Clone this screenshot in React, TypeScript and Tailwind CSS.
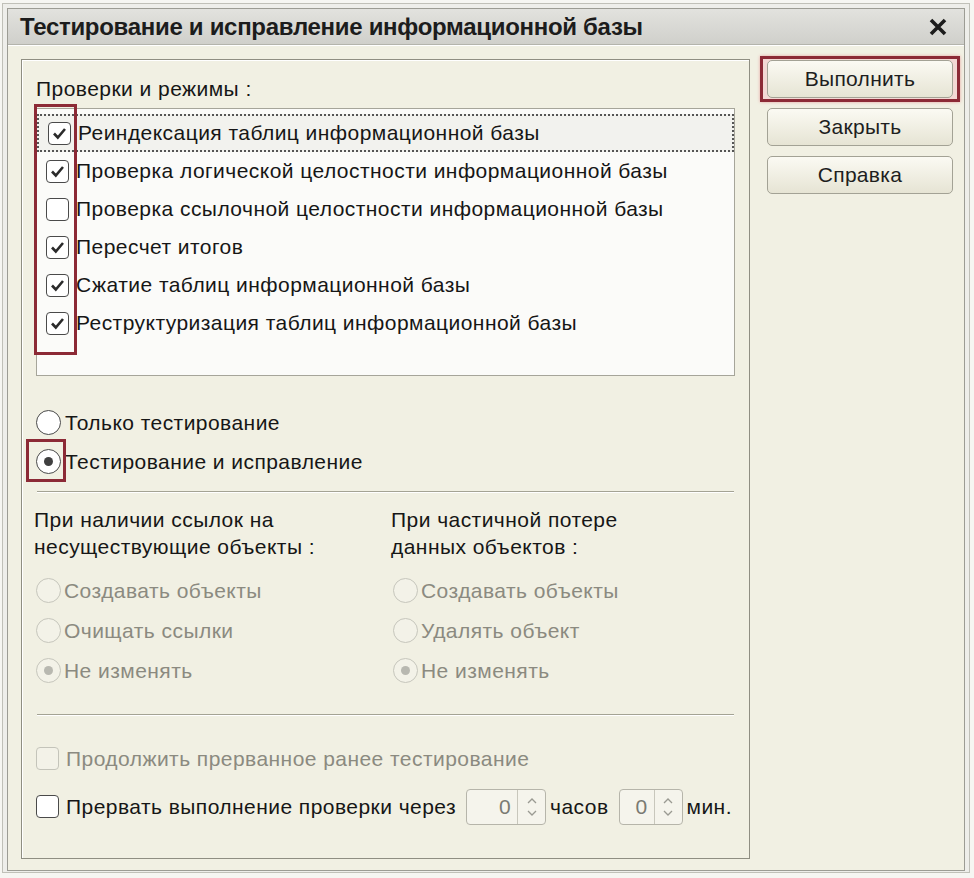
import React from "react";

const FONT = { fontFamily: '"Liberation Sans", Arial, sans-serif' };

const CHECKS = [
  { label: "Реиндексация таблиц информационной базы", checked: true, focus: true },
  { label: "Проверка логической целостности информационной базы", checked: true },
  { label: "Проверка ссылочной целостности информационной базы", checked: false },
  { label: "Пересчет итогов", checked: true },
  { label: "Сжатие таблиц информационной базы", checked: true },
  { label: "Реструктуризация таблиц информационной базы", checked: true },
];

function CheckBox({ checked, disabled }: { checked?: boolean; disabled?: boolean }) {
  return (
    <div
      className={`flex h-[23px] w-[23px] shrink-0 items-center justify-center rounded-[4px] border-[1.5px] ${
        disabled ? "border-[#c4c4ba] bg-[#f3f2e8]" : "border-[#4a4a4a] bg-white"
      }`}
    >
      {checked && (
        <svg width="17" height="17" viewBox="0 0 17 17">
          <path d="M3 8.5 L6.8 12.5 L14 4" fill="none" stroke="#2b2b2b" strokeWidth="2.6" />
        </svg>
      )}
    </div>
  );
}

function Radio({ selected, disabled }: { selected?: boolean; disabled?: boolean }) {
  return (
    <div
      className={`flex h-[25px] w-[25px] shrink-0 items-center justify-center rounded-full border-[1.5px] ${
        disabled ? "border-[#c6c6bc] bg-[#f3f2e8]" : "border-[#4a4a4a] bg-white"
      }`}
    >
      {selected && (
        <div
          className={`h-[9px] w-[9px] rounded-full ${
            disabled ? "bg-[#b8b8b0]" : "bg-[#404040]"
          }`}
        />
      )}
    </div>
  );
}

function Button({ label, primary }: { label: string; primary?: boolean }) {
  const btn = (
    <div className="flex h-[38px] items-center justify-center rounded-[5px] border border-[#a3a295] bg-gradient-to-b from-[#fbfaf3] to-[#e6e4d4] text-[21px] tracking-[0.3px] text-[#1e1e1e]">
      {label}
    </div>
  );
  if (!primary) return btn;
  return (
    <div className="-mx-[7px] -my-[4px] border-[3px] border-[#8c2a36] bg-[#f3d8d4] px-[4px] py-[1px] shadow-[0_0_3px_#e6a0a0]">
      {btn}
    </div>
  );
}

function SpinBox({ width }: { width: string }) {
  return (
    <div className={`flex h-[36px] ${width} shrink-0 items-stretch rounded-[4px] border border-[#b6b5aa] bg-[#f5f4ec]`}>
      <div className="flex flex-1 items-center justify-end pr-[6px] text-[21px] text-[#7a7a72]">0</div>
      <div className="flex w-[28px] flex-col items-center justify-center gap-[6px] border-l border-[#c8c7bc]">
        <svg width="10" height="6" viewBox="0 0 10 6">
          <path d="M1 5 L5 1 L9 5" fill="none" stroke="#9a9a92" strokeWidth="1.3" />
        </svg>
        <svg width="10" height="6" viewBox="0 0 10 6">
          <path d="M1 1 L5 5 L9 1" fill="none" stroke="#9a9a92" strokeWidth="1.3" />
        </svg>
      </div>
    </div>
  );
}

function Separator() {
  return <div className="mx-[15px] h-[2px] border-t border-b border-t-[#a4a394] border-b-white" />;
}

export default function App() {
  return (
    <div style={FONT} className="h-[878px] w-[974px] bg-[#f6f6f2] pl-[2px] pt-[3px]">
      <div className="h-[870px] w-[968px] border border-[#c0c0b8] bg-[#eeeeea] p-[4px]">
        <div className="flex h-[863px] w-[958px] flex-col border border-[#9c9c94]">
          {/* title bar */}
          <div className="flex h-[36px] shrink-0 items-center justify-between border-b border-[#b4b4ac] bg-gradient-to-b from-[#e2e2de] to-[#d0d0cb] pl-[12px] pr-[16px]">
            <span className="text-[24px] font-bold tracking-[-0.3px] text-[#1c1c1c]">
              Тестирование и исправление информационной базы
            </span>
            <svg width="20" height="18" viewBox="0 0 20 18">
              <path d="M3 2 L17 16 M17 2 L3 16" stroke="#1c1c1c" strokeWidth="3.6" />
            </svg>
          </div>

          {/* body */}
          <div className="flex flex-1 gap-[17px] border-t border-white bg-[#f1f0e3] pl-[13px] pt-[13px] text-[21px] tracking-[0.45px] text-[#161616]">
            {/* main panel */}
            <div className="relative flex h-[800px] w-[729px] shrink-0 flex-col border border-[#8f8e82] shadow-[inset_1px_1px_0_#fff]">
              <div className="pl-[14px] pt-[16px] leading-[26px]">Проверки и режимы :</div>

              <div className="relative mx-[14px] mt-[6px] h-[268px] border border-[#a6a59a] bg-[#fbfbf9] pt-[5px]">
                {CHECKS.map((c) => (
                  <div
                    key={c.label}
                    className={`flex h-[38px] items-center gap-[7px] pl-[9px] ${
                      c.focus ? "border-2 border-dotted border-[#555] bg-[#f2f2ee] pl-[7px]" : ""
                    }`}
                  >
                    <CheckBox checked={c.checked} />
                    <span className="whitespace-nowrap">{c.label}</span>
                  </div>
                ))}
              </div>

              <div className="flex flex-col gap-[14px] pl-[14px] pt-[34px]">
                <div className="flex h-[25px] items-center gap-[4px]">
                  <Radio />
                  <span>Только тестирование</span>
                </div>
                <div className="flex h-[25px] items-center gap-[4px]">
                  <Radio selected />
                  <span>Тестирование и исправление</span>
                </div>
              </div>

              <div className="mt-[17px]">
                <Separator />
              </div>

              <div className="flex pl-[12px] pt-[13px]">
                {[
                  {
                    title: ["При наличии ссылок на", "несуществующие объекты :"],
                    items: ["Создавать объекты", "Очищать ссылки", "Не изменять"],
                  },
                  {
                    title: ["При частичной потере", "данных объектов :"],
                    items: ["Создавать объекты", "Удалять объект", "Не изменять"],
                  },
                ].map((col) => (
                  <div key={col.title[0]} className="w-[357px]">
                    <div className="leading-[27px]">
                      <div>{col.title[0]}</div>
                      <div>{col.title[1]}</div>
                    </div>
                    <div className="mt-[18px] flex flex-col gap-[15px] pl-[2px]">
                      {col.items.map((it, i) => (
                        <div key={it} className="flex h-[25px] items-center gap-[3px] text-[#8b8a80]">
                          <Radio disabled selected={i === 2} />
                          <span>{it}</span>
                        </div>
                      ))}
                    </div>
                  </div>
                ))}
              </div>

              <div className="mt-[31px]">
                <Separator />
              </div>

              <div className="flex flex-col gap-[25px] pl-[14px] pt-[31px]">
                <div className="flex h-[23px] items-center gap-[7px] text-[#8b8a80]">
                  <CheckBox disabled />
                  <span className="whitespace-nowrap">Продолжить прерванное ранее тестирование</span>
                </div>
                <div className="flex h-[23px] items-center whitespace-nowrap">
                  <CheckBox />
                  <span className="ml-[7px] mr-[10px]">Прервать выполнение проверки через</span>
                  <SpinBox width="w-[80px]" />
                  <span className="ml-[4px] mr-[10px]">часов</span>
                  <SpinBox width="w-[64px]" />
                  <span className="ml-[4px]">мин.</span>
                </div>
              </div>

              {/* annotation frames */}
              <div className="pointer-events-none absolute left-[12px] top-[44px] h-[251px] w-[43px] border-[3px] border-[#8c2a36]" />
              <div className="pointer-events-none absolute left-[4px] top-[379px] h-[43px] w-[40px] border-[3px] border-[#8c2a36]" />
            </div>

            {/* buttons */}
            <div className="flex w-[186px] flex-col gap-[10px] pt-[1px]">
              <Button label="Выполнить" primary />
              <Button label="Закрыть" />
              <Button label="Справка" />
            </div>
          </div>
        </div>
      </div>
    </div>
  );
}
